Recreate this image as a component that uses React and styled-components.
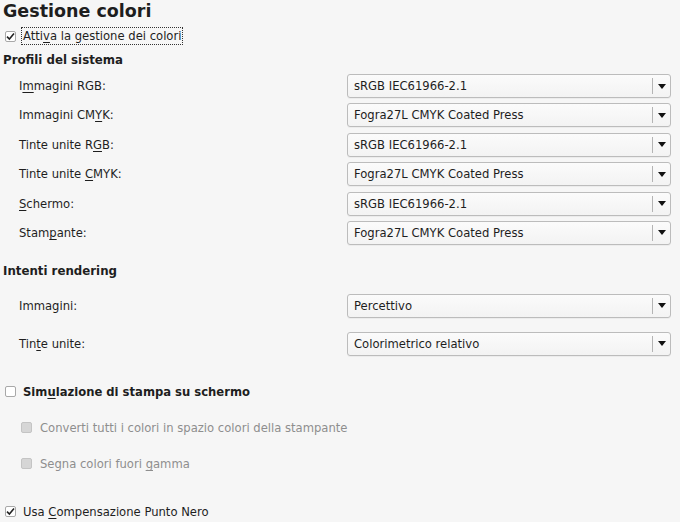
import React from "react";
import styled, { createGlobalStyle } from "styled-components";

const GlobalStyle = createGlobalStyle`
  html, body {
    margin: 0;
    padding: 0;
    background: #f6f6f6;
  }
  body {
    font-family: "DejaVu Sans", "Liberation Sans", sans-serif;
    font-size: 11.6px;
    color: #1e1e1e;
  }
`;

const Page = styled.div`
  width: 680px;
  height: 522px;
  overflow: hidden;
  display: flex;
  flex-direction: column;
  padding: 0 9px 0 3px;
  box-sizing: border-box;
`;

const Title = styled.h1`
  margin: 0;
  font-size: 17.5px;
  font-weight: bold;
  line-height: 22px;
  height: 24px;
`;

const Heading = styled.div`
  font-weight: bold;
  font-size: 11.8px;
  line-height: 16px;
  margin-top: ${(p) => p.top || 0}px;
`;

const CheckRow = styled.label`
  display: flex;
  align-items: center;
  gap: ${(p) => (p.disabled ? 8 : 7)}px;
  height: 18px;
  margin-top: ${(p) => p.top || 0}px;
  padding-left: ${(p) => p.indent || 2}px;
  font-weight: ${(p) => (p.bold ? "bold" : "normal")};
  color: ${(p) => (p.disabled ? "#8e8e8e" : "#1e1e1e")};
`;

const Box = styled.span`
  width: 11px;
  height: 11px;
  box-sizing: border-box;
  border: 1px solid ${(p) => (p.disabled ? "#c4c4c4" : "#a8a8a8")};
  border-radius: 2px;
  background: ${(p) => (p.disabled ? "#d6d6d6" : "#ffffff")};
  display: flex;
  align-items: center;
  justify-content: center;
  flex-shrink: 0;
`;

const Focus = styled.span`
  outline: 1px dotted #333;
  outline-offset: 0;
  padding: 1px 1px;
  margin-left: -1px;
`;

const Mn = styled.span`
  text-decoration: underline;
  text-underline-offset: 2px;
`;

const Rows = styled.div`
  display: flex;
  flex-direction: column;
  gap: ${(p) => p.gap}px;
  margin-top: ${(p) => p.top}px;
`;

const Row = styled.div`
  display: grid;
  grid-template-columns: 344px 1fr;
  align-items: center;
  height: 24px;
`;

const Label = styled.span`
  padding-left: 16px;
`;

const Combo = styled.div`
  height: 24px;
  box-sizing: border-box;
  border: 1px solid #bcbcbc;
  border-radius: 3px;
  background: linear-gradient(#fbfbfb, #f3f3f3);
  display: flex;
  align-items: center;
  box-shadow: 0 1px 0 rgba(0, 0, 0, 0.04);
`;

const ComboText = styled.span`
  flex: 1;
  padding-left: 6px;
`;

const Sep = styled.span`
  width: 1px;
  height: 16px;
  background: #b4b4b4;
`;

const Arrow = styled.span`
  width: 17px;
  display: flex;
  justify-content: center;
`;

const Check = () => (
  <svg width="9" height="9" viewBox="0 0 9 9">
    <path d="M1 4.6 L3.4 7 L8 1.6" fill="none" stroke="#222" strokeWidth="1.6" />
  </svg>
);

const Tri = () => (
  <svg width="8" height="5" viewBox="0 0 8 5">
    <path d="M0 0 H8 L4 5 Z" fill="#111" />
  </svg>
);

function Select({ value }) {
  return (
    <Combo>
      <ComboText>{value}</ComboText>
      <Sep />
      <Arrow>
        <Tri />
      </Arrow>
    </Combo>
  );
}

const SRGB = "sRGB IEC61966-2.1";
const FOGRA = "Fogra27L CMYK Coated Press";

const profiles = [
  [<>I<Mn>m</Mn>magini RGB:</>, SRGB],
  [<>Immagini CM<Mn>Y</Mn>K:</>, FOGRA],
  [<>Tinte unite R<Mn>G</Mn>B:</>, SRGB],
  [<>Tinte unite <Mn>C</Mn>MYK:</>, FOGRA],
  [<><Mn>S</Mn>chermo:</>, SRGB],
  [<>Stam<Mn>p</Mn>ante:</>, FOGRA],
];

const intents = [
  [<>Immagini:</>, "Percettivo"],
  [<>Tin<Mn>t</Mn>e unite:</>, "Colorimetrico relativo"],
];

export default function App() {
  return (
    <>
      <GlobalStyle />
      <Page>
        <Title>Gestione colori</Title>
        <CheckRow top={3}>
          <Box>
            <Check />
          </Box>
          <Focus>
            Atti<Mn>v</Mn>a la gestione dei colori
          </Focus>
        </CheckRow>
        <Heading top={7}>Profili del sistema</Heading>
        <Rows gap={5.4} top={6}>
          {profiles.map(([label, value], i) => (
            <Row key={i}>
              <Label>{label}</Label>
              <Select value={value} />
            </Row>
          ))}
        </Rows>
        <Heading top={18}>Intenti rendering</Heading>
        <Rows gap={14} top={15}>
          {intents.map(([label, value], i) => (
            <Row key={i}>
              <Label>{label}</Label>
              <Select value={value} />
            </Row>
          ))}
        </Rows>
        <CheckRow bold top={27}>
          <Box />
          <span>
            Sim<Mn>u</Mn>lazione di stampa su schermo
          </span>
        </CheckRow>
        <CheckRow disabled indent={18} top={18}>
          <Box disabled />
          <span>Converti tutti i colori in spazio colori della stampante</span>
        </CheckRow>
        <CheckRow disabled indent={18} top={18}>
          <Box disabled />
          <span>
            Segna colori fuori <Mn>g</Mn>amma
          </span>
        </CheckRow>
        <CheckRow top={30}>
          <Box>
            <Check />
          </Box>
          <span>
            Usa <Mn>C</Mn>ompensazione Punto Nero
          </span>
        </CheckRow>
      </Page>
    </>
  );
}
